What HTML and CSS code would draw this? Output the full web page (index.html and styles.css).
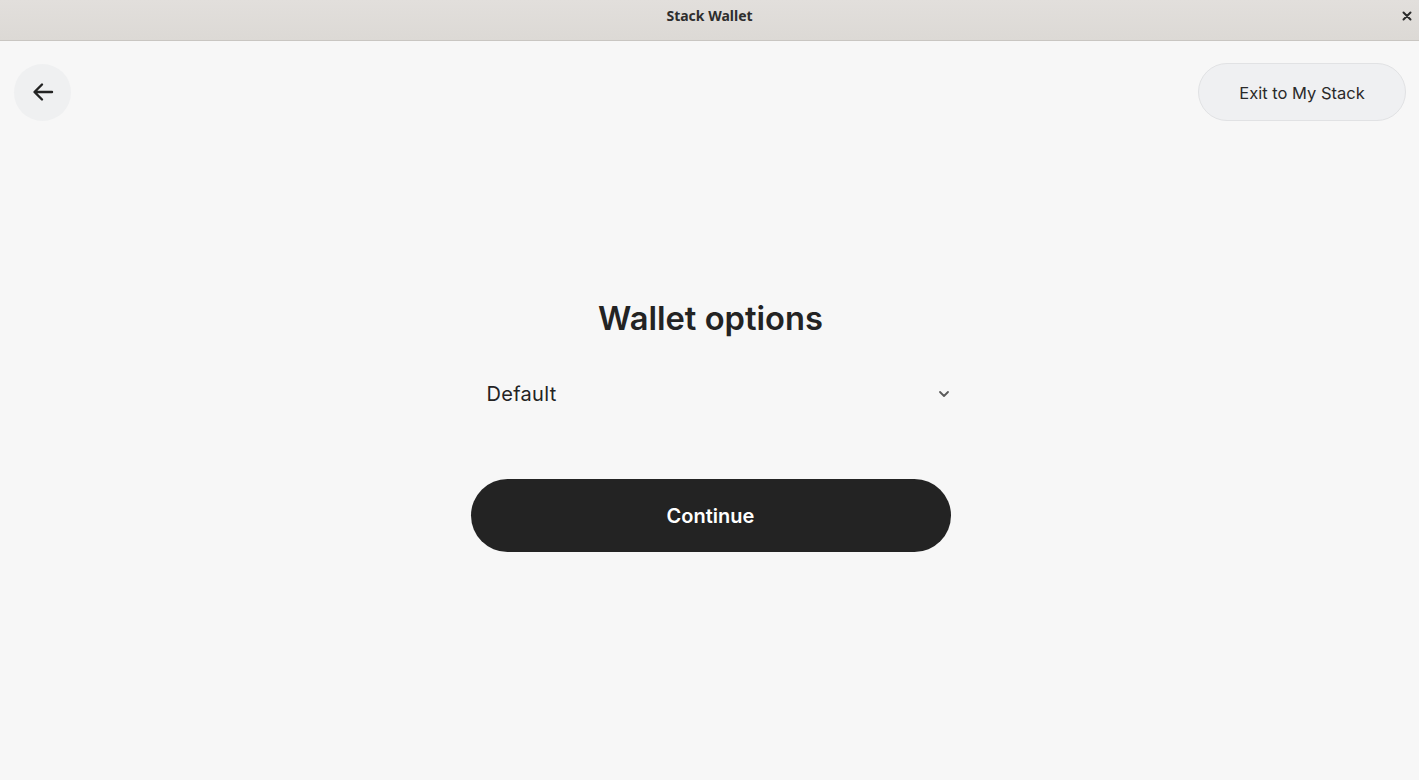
FILE: index.html
```html
<!DOCTYPE html>
<html lang="en">
<head>
<meta charset="utf-8">
<title>Stack Wallet</title>
<link rel="stylesheet" href="styles.css">
</head>
<body>
<div class="window">
  <header class="titlebar">
    <span class="title">Stack Wallet</span>
    <button class="close" aria-label="Close">
      <svg width="10" height="10" viewBox="0 0 10 10"><path d="M1.5 1.5 L8.5 8.5 M8.5 1.5 L1.5 8.5" stroke="#2b2b2b" stroke-width="2" stroke-linecap="round"/></svg>
    </button>
  </header>
  <main class="content">
    <div class="topbar">
      <button class="back" aria-label="Back">
        <svg width="24" height="24" viewBox="0 0 24 24"><path d="M21 12 H4 M11 4.5 L3.5 12 L11 19.5" fill="none" stroke="#232323" stroke-width="2.4" stroke-linecap="round" stroke-linejoin="round"/></svg>
      </button>
      <button class="exit">Exit to My Stack</button>
    </div>
    <section class="panel">
      <h1 class="heading">Wallet options</h1>
      <div class="select">
        <span class="select-value">Default</span>
        <svg class="chevron" width="12" height="8" viewBox="0 0 12 8"><path d="M2 2 L6 6 L10 2" fill="none" stroke="#5a5a5a" stroke-width="1.8" stroke-linecap="round" stroke-linejoin="round"/></svg>
      </div>
      <button class="continue">Continue</button>
    </section>
  </main>
</div>
</body>
</html>
```

FILE: styles.css
```css
* { box-sizing: border-box; }
html, body { margin: 0; padding: 0; height: 100%; }
body {
  background: #f7f7f7;
  font-family: Inter, "Noto Sans", sans-serif;
  color: #232323;
}
.window { display: flex; flex-direction: column; height: 100%; }
.titlebar {
  position: relative;
  height: 41px;
  flex: 0 0 41px;
  background: linear-gradient(#e2dfdc, #dcd9d5);
  border-bottom: 1px solid #c9c6c2;
  display: flex;
  align-items: center;
  justify-content: center;
}
.title {
  font-family: "Noto Sans", "DejaVu Sans", sans-serif;
  font-weight: 700;
  font-size: 14px;
  color: #2e2e2e;
  margin-top: -9px;
}
.close {
  position: absolute;
  right: 6px;
  top: 10px;
  width: 12px;
  height: 12px;
  padding: 0;
  border: 0;
  background: transparent;
  display: flex;
  align-items: center;
  justify-content: center;
}
.content { flex: 1; display: flex; flex-direction: column; padding-left: 2px; }
.topbar {
  display: flex;
  justify-content: space-between;
  align-items: center;
  padding: 22px 13px 0 12px;
}
.back {
  width: 57px;
  height: 57px;
  border-radius: 50%;
  border: 0;
  background: #eff0f1;
  display: flex;
  align-items: center;
  justify-content: center;
  padding: 0;
}
.exit {
  height: 58px;
  width: 208px;
  border-radius: 29px;
  border: 1px solid #e1e2e4;
  background: #eff0f2;
  font-family: Inter, "Noto Sans", sans-serif;
  font-size: 16.5px;
  color: #2a2a2a;
  padding: 1px 0 0;
}
.panel {
  width: 480px;
  margin: 177px auto 0;
  display: flex;
  flex-direction: column;
  align-items: stretch;
}
.heading {
  margin: 0;
  text-align: center;
  font-size: 32.7px;
  line-height: 40px;
  font-weight: 600;
  color: #232323;
}
.select {
  margin-top: 28px;
  height: 56px;
  display: flex;
  align-items: center;
  justify-content: space-between;
  padding: 0 1px 0 16px;
}
.select-value { font-size: 20px; letter-spacing: 0.3px; color: #232323; }
.continue {
  margin-top: 57px;
  height: 73px;
  border-radius: 37px;
  border: 0;
  background: #232323;
  color: #ffffff;
  font-family: Inter, "Noto Sans", sans-serif;
  font-size: 20px;
  font-weight: 600;
}
```
